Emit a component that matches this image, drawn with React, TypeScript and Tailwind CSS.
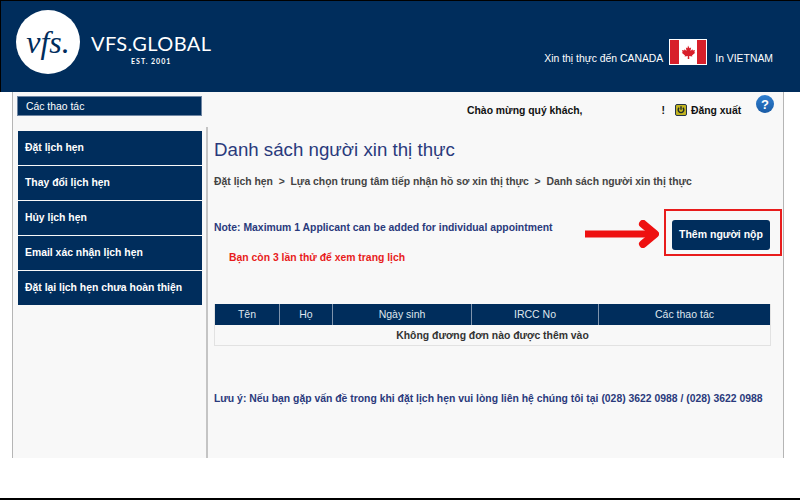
import React from "react";

const menuItems = [
  "Đặt lịch hẹn",
  "Thay đổi lịch hẹn",
  "Hủy lịch hẹn",
  "Email xác nhận lịch hẹn",
  "Đặt lại lịch hẹn chưa hoàn thiện",
];

const columns = [
  { name: "Tên", width: "w-[65px]" },
  { name: "Họ", width: "w-[53px]" },
  { name: "Ngày sinh", width: "w-[139px]" },
  { name: "IRCC No", width: "w-[127px]" },
  { name: "Các thao tác", width: "flex-1" },
];

const CanadaFlag = () => (
  <svg width="38" height="26" viewBox="0 0 38 26" className="shrink-0 block">
    <rect width="38" height="26" fill="#fff" />
    <rect x="1" y="1" width="9" height="24" fill="#d81f2a" />
    <rect x="28" y="1" width="9" height="24" fill="#d81f2a" />
    <path
      d="M19 6.500l1.500 2.800 1.600-.9-.6 3.700 1.900-1.900.5 1.200 2.100-.4-.7 2.300.9.500-3.200 2.600.4 1.200-3.200-.5.1 2.900h-1.600l.1-2.900-3.200.5.4-1.200-3.200-2.600.9-.5-.7-2.300 2.100.4.500-1.200 1.900 1.900-.6-3.700 1.600.9z"
      fill="#d81f2a"
    />
  </svg>
);

const AddArrow = () => (
  <svg width="74" height="28" viewBox="0 0 74 28" className="absolute left-[585px] top-[220px]">
    <path d="M0 14h68" stroke="#ee1111" strokeWidth="7" fill="none" />
    <path
      d="M58 4l12 10-12 10"
      stroke="#ee1111"
      strokeWidth="8"
      strokeLinecap="round"
      strokeLinejoin="round"
      fill="none"
    />
  </svg>
);

export default function App() {
  return (
    <div className="relative w-[800px] h-[500px] bg-white flex flex-col overflow-hidden border-b-2 border-black font-['Liberation_Sans',Arial,sans-serif]">
      {/* header */}
      <header className="h-[92px] shrink-0 bg-[#002d5c] border-t border-l border-black flex items-start justify-between pl-[15px] pr-[27px] pt-[9px]">
        <div className="flex items-start gap-[11px]">
          <div className="w-[64px] h-[64px] rounded-full bg-white flex items-center justify-center">
            <span className="text-[#002d5c] text-[32px] italic leading-none font-['Liberation_Serif',serif]">
              vfs.
            </span>
          </div>
          <div className="flex flex-col items-center text-white mt-[21px]">
            <span className="text-[20px] leading-[24px] tracking-[0.4px] font-['Lato',sans-serif]">
              VFS.GLOBAL
            </span>
            <span className="text-[7px] leading-[10px] mt-[1px] font-bold tracking-[1px] font-['Lato',sans-serif]">
              EST. 2001
            </span>
          </div>
        </div>
        <div className="flex items-center text-white text-[10.400px] mt-[29px]">
          <span className="pt-[1px]">Xin thị thực đến CANADA</span>
          <span className="ml-[6px] mr-[8px] mb-[12px]">
            <CanadaFlag />
          </span>
          <span className="pt-[1px]">In VIETNAM</span>
        </div>
      </header>

      {/* page body */}
      <div className="ml-[12px] mr-[16px] h-[366px] bg-[#f8f8f8] border-x border-[#b5b5b5] flex">
        <aside className="w-[189px] shrink-0 pl-[4px] pt-[4px] flex flex-col">
          <div className="h-[20px] bg-[#002d5c] border border-[#6f86a3] text-white text-[10.400px] leading-[18px] pl-[8px] pt-[1px]">
            Các thao tác
          </div>
          <nav className="mt-[15px] pl-[1px] flex flex-col gap-[1.200px]">
            {menuItems.map((item) => (
              <a
                key={item}
                className="h-[33.800px] bg-[#002d5c] text-white text-[10.400px] font-bold flex items-center pl-[7px]"
              >
                {item}
              </a>
            ))}
          </nav>
        </aside>

        <main className="flex-1 min-w-0 flex flex-col">
          <div className="h-[35px] flex items-start pt-[12px] text-[10.400px] leading-[13px] font-bold text-[#111] pl-[265px]">
            <span>Chào mừng quý khách,</span>
            <span className="ml-[79px]">!</span>
            <span className="ml-[10px] mr-[4px] w-[12px] h-[12px] rounded-[2px] bg-[#c2b420] border border-[#24344a] flex items-center justify-center">
              <svg width="8" height="8" viewBox="0 0 8 8" fill="none" stroke="#1d2a2a" strokeWidth="1.400">
                <path d="M4 .3v3.400" />
                <path d="M2.100 1.800a2.800 2.800 0 1 0 3.800 0" />
              </svg>
            </span>
            <span>Đăng xuất</span>
          </div>

          <div className="flex-1 ml-[4px] border-l-2 border-[#c4c4c4] pl-[6px] pr-[12px]">
            <h1 className="text-[18.700px] leading-[24px] text-[#2a3a7c] mt-[11px]">
              Danh sách người xin thị thực
            </h1>
            <p className="mt-[13px] text-[10.400px] font-bold text-[#444] leading-[14px] whitespace-pre">
              {"Đặt lịch hẹn  >  Lựa chọn trung tâm tiếp nhận hồ sơ xin thị thực  >  Danh sách người xin thị thực"}
            </p>
            <p className="mt-[32px] text-[10.400px] font-bold text-[#2a3a7c] leading-[14px]">
              Note: Maximum 1 Applicant can be added for individual appointment
            </p>
            <p className="mt-[16px] ml-[15px] text-[10.400px] font-bold text-[#e81c1c] leading-[14px]">
              Bạn còn 3 lần thử để xem trang lịch
            </p>

            <div className="mt-[39px] w-[557px] border-b border-x border-[#e2e2e2]">
              <div className="flex h-[21px] bg-[#002d5c] text-[#dfe6ee] text-[10.500px]">
                {columns.map((col, i) => (
                  <div
                    key={col.name}
                    className={`${col.width} flex items-center justify-center ${
                      i < columns.length - 1 ? "border-r border-[#7f94ad]" : ""
                    }`}
                  >
                    {col.name}
                  </div>
                ))}
              </div>
              <div className="h-[20px] flex items-center justify-center pt-[1px] text-[10.400px] font-bold text-[#333]">
                Không đương đơn nào được thêm vào
              </div>
            </div>

            <p className="mt-[46px] text-[10.400px] font-bold text-[#2a3a7c] leading-[14px] whitespace-nowrap">
              Lưu ý: Nếu bạn gặp vấn đề trong khi đặt lịch hẹn vui lòng liên hệ chúng tôi tại (028) 3622 0988 / (028) 3622 0988
            </p>
          </div>
        </main>
      </div>

      {/* help icon */}
      <div className="absolute left-[756px] top-[95px] w-[18px] h-[18px] rounded-full bg-linear-to-b from-[#2f7fd0] to-[#1a5ca6] text-white text-[13px] font-bold flex items-center justify-center leading-none">
        ?
      </div>

      {/* highlighted add button */}
      <AddArrow />
      <div className="absolute left-[664px] top-[209px] w-[118px] h-[47px] border-2 border-[#e81c1c] flex items-start pl-[6px] pt-[9px]">
        <button className="w-[98px] h-[30px] rounded-[3px] bg-[#002d5c] text-white text-[10.500px] font-bold">
          Thêm người nộp
        </button>
      </div>
    </div>
  );
}
